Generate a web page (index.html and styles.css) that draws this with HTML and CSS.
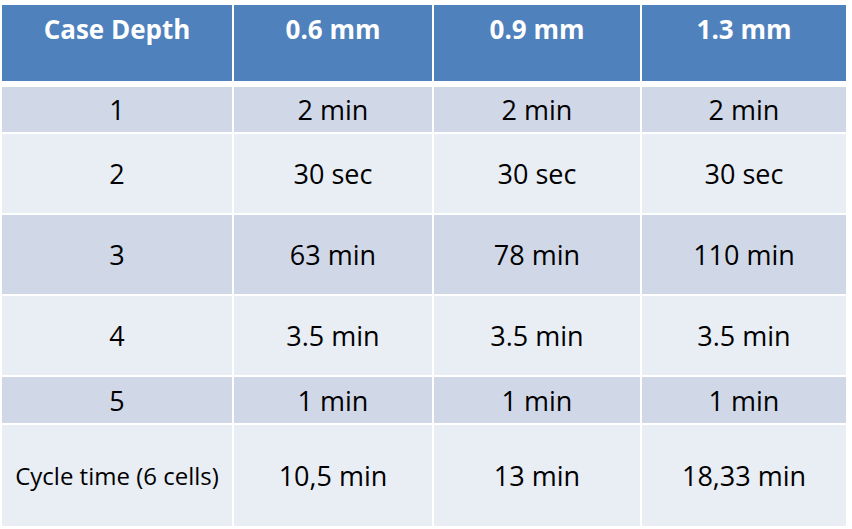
FILE: index.html
```html
<!DOCTYPE html>
<html>
<head>
<meta charset="utf-8">
<link rel="stylesheet" href="styles.css">
</head>
<body>
<div class="table">
  <div class="hd">Case Depth</div>
  <div class="hd">0.6 mm</div>
  <div class="hd">0.9 mm</div>
  <div class="hd">1.3 mm</div>

  <div class="c odd">1</div>
  <div class="c odd">2 min</div>
  <div class="c odd">2 min</div>
  <div class="c odd">2 min</div>

  <div class="c even">2</div>
  <div class="c even">30 sec</div>
  <div class="c even">30 sec</div>
  <div class="c even">30 sec</div>

  <div class="c odd">3</div>
  <div class="c odd">63 min</div>
  <div class="c odd">78 min</div>
  <div class="c odd">110 min</div>

  <div class="c even">4</div>
  <div class="c even">3.5 min</div>
  <div class="c even">3.5 min</div>
  <div class="c even">3.5 min</div>

  <div class="c odd">5</div>
  <div class="c odd">1 min</div>
  <div class="c odd">1 min</div>
  <div class="c odd">1 min</div>

  <div class="c even small">Cycle time (6 cells)</div>
  <div class="c even">10,5 min</div>
  <div class="c even">13 min</div>
  <div class="c even">18,33 min</div>
</div>
</body>
</html>
```

FILE: styles.css
```css
html, body {
  margin: 0;
  padding: 0;
  background: #ffffff;
}
body {
  font-family: "Open Sans", "Liberation Sans", sans-serif;
  color: #000;
}
.table {
  margin: 5px 0 0 2px;
  display: grid;
  grid-template-columns: 230px 198px 206px 204px;
  grid-template-rows: 80px 45px 79px 79px 79px 46px 101px;
  column-gap: 2px;
  row-gap: 2px;
  width: 844px;
}
.hd {
  background: #4f81bd;
  color: #fff;
  font-weight: 700;
  font-size: 26px;
  text-align: center;
  padding-top: 9px;
  line-height: 30px;
  margin-bottom: 4px;
}
.c {
  display: flex;
  align-items: center;
  justify-content: center;
  font-size: 27px;
  line-height: 1;
}
.odd { background: #d0d8e8; }
.even { background: #e9edf4; }
.c.small { font-size: 24px; }
```
